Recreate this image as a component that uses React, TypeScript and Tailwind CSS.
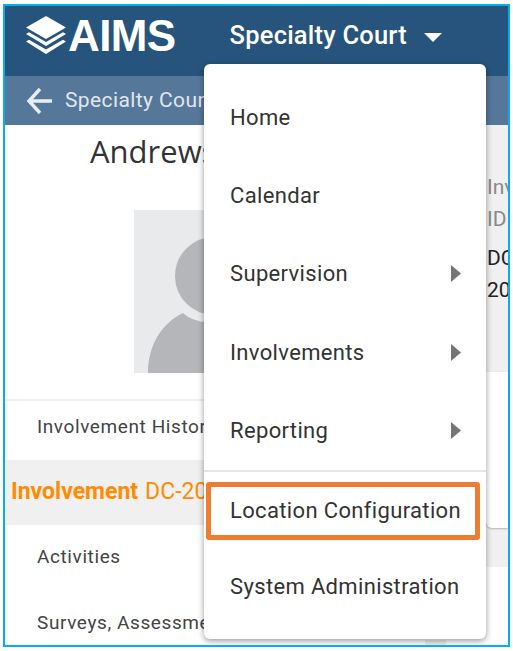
import { ReactNode } from "react";

function Logo() {
  return (
    <svg width="42" height="39" viewBox="0 0 42 39" className="shrink-0">
      <path d="M21 0 L41 11.5 L21 23 L1 11.5 Z" fill="#fff" />
      <path d="M1 18 L4 16.2 L21 26 L38 16.2 L41 18 L21 30 Z" fill="#fff" />
      <path d="M1 25.5 L4 23.7 L21 33.5 L38 23.7 L41 25.5 L21 38 Z" fill="#fff" />
    </svg>
  );
}

function MenuItem({ label, arrow, boxed }: { label: string; arrow?: boolean; boxed?: boolean }) {
  return (
    <div
      className={
        boxed
          ? "mx-[2px] h-[58px] w-[274px] shrink-0 flex items-center pl-[19px] border-[5px] border-[#ed7d31] rounded-[3px] text-[22px] tracking-[0.35px] text-[#333] whitespace-nowrap mt-[10px] mb-[7px]"
          : "h-[78.4px] shrink-0 flex items-center justify-between pl-[26px] pr-[25px] text-[22px] tracking-[0.35px] text-[#333] whitespace-nowrap"
      }
    >
      <span>{label}</span>
      {arrow && (
        <svg width="10" height="17" viewBox="0 0 10 17">
          <path d="M0 0 L10 8.5 L0 17 Z" fill="#757575" />
        </svg>
      )}
    </div>
  );
}

function SideRow({ children, className }: { children: ReactNode; className?: string }) {
  return <div className={"flex items-center shrink-0 whitespace-nowrap " + (className ?? "")}>{children}</div>;
}

export default function App() {
  return (
    <div className="w-[513px] h-[651px] bg-white pt-[4px] pl-[3px] font-['Roboto',sans-serif]">
      <div className="relative w-[507px] h-[643px] border-2 border-[#00b0f0] overflow-hidden bg-white flex flex-col">
        <header className="h-[70px] shrink-0 bg-[#26547c] flex items-center pb-[11px] text-white">
          <div className="ml-[20px] flex items-center">
            <Logo />
            <span className="ml-[1px] font-['Liberation_Sans',sans-serif] font-bold text-[44px] leading-none tracking-[-0.6px]">AIMS</span>
          </div>
          <span className="ml-[54px] text-[25.5px] font-medium tracking-[0.2px]">Specialty Court</span>
          <svg width="18" height="9" viewBox="0 0 18 9" className="ml-[17px] mt-[4px]">
            <path d="M0 0 H18 L9 9 Z" fill="#fff" />
          </svg>
        </header>

        <div className="h-[49px] shrink-0 bg-[#557799] flex items-center pt-[1px] text-[#e1e7ee] text-[21px] tracking-[0.4px] whitespace-nowrap">
          <svg width="28" height="28" viewBox="0 0 28 28" className="ml-[21px] shrink-0">
            <path d="M26 14 H3 M14 2 L3 14 L14 26" fill="none" stroke="#e8edf2" strokeWidth="3.4" />
          </svg>
          <span className="ml-[11px]">Specialty Court</span>
        </div>

        <div className="flex-1 flex min-h-0">
          <div className="w-[481px] shrink-0 flex flex-col bg-white">
            <div className="pl-[85px] pt-[4px] h-[85px] shrink-0 font-['Open_Sans',sans-serif] text-[31px] leading-[44px] text-[#333]">
              Andrews
            </div>
            <div className="ml-[129px] w-[160px] h-[163px] shrink-0 bg-[#e9eaec] overflow-hidden">
              <svg width="160" height="163" viewBox="0 0 160 163">
                <path d="M14 163 C14 135 28 113 49 103 C62 116 98 116 111 103 C132 113 146 135 146 163 Z" fill="#b5b6b9" />
                <circle cx="80" cy="66" r="41" fill="#b5b6b9" stroke="#e9eaec" strokeWidth="4" />
              </svg>
            </div>
            <div className="mt-[26px] h-[2px] shrink-0 bg-[#efefef]" />
            <SideRow className="h-[59px] pb-[6px] pl-[32px] text-[19px] tracking-[0.6px] text-[#444]">Involvement History</SideRow>
            <SideRow className="h-[65px] pl-[6px] bg-[#f0f0f0] text-[23px] text-[#ff8c00]">
              <b className="font-bold">Involvement</b>
              <span className="ml-[7px]">DC-2021</span>
            </SideRow>
            <SideRow className="h-[65px] pl-[32px] text-[19px] tracking-[0.6px] text-[#444]">Activities</SideRow>
            <SideRow className="h-[65px] pt-[2px] pl-[32px] text-[19px] tracking-[0.6px] text-[#444]">Surveys, Assessments</SideRow>
          </div>

          <div className="flex-1 flex flex-col bg-[#f0f0f0] overflow-hidden whitespace-nowrap">
            <div className="h-[247px] shrink-0 pl-[1px] pt-[46px] text-[21px] leading-[32px]">
              <div className="text-[#8a8a8a]">Involvement</div>
              <div className="text-[#8a8a8a]">ID</div>
              <div className="mt-[7px] text-[#222]">DC-2021</div>
              <div className="text-[#222]">2021</div>
            </div>
            <div className="h-[156px] shrink-0 bg-white rounded-bl-[6px] shadow-[0_1px_2px_rgba(0,0,0,0.25)]" />
            <div className="h-[39px] shrink-0" />
            <div className="flex-1 bg-white" />
          </div>
        </div>

        <div className="absolute left-[420px] bottom-0 w-[21px] h-[5px] bg-[#eeeeee]" />

        <nav className="absolute left-[199px] top-[58px] w-[282px] h-[575px] bg-white rounded-[6px] pt-[14px] shadow-[0_2px_6px_rgba(0,0,0,0.4)] flex flex-col">
          <MenuItem label="Home" />
          <MenuItem label="Calendar" />
          <MenuItem label="Supervision" arrow />
          <MenuItem label="Involvements" arrow />
          <MenuItem label="Reporting" arrow />
          <div className="h-[2px] shrink-0 bg-[#e4e4e4]" />
          <MenuItem label="Location Configuration" boxed />
          <MenuItem label="System Administration" />
        </nav>
      </div>
    </div>
  );
}
